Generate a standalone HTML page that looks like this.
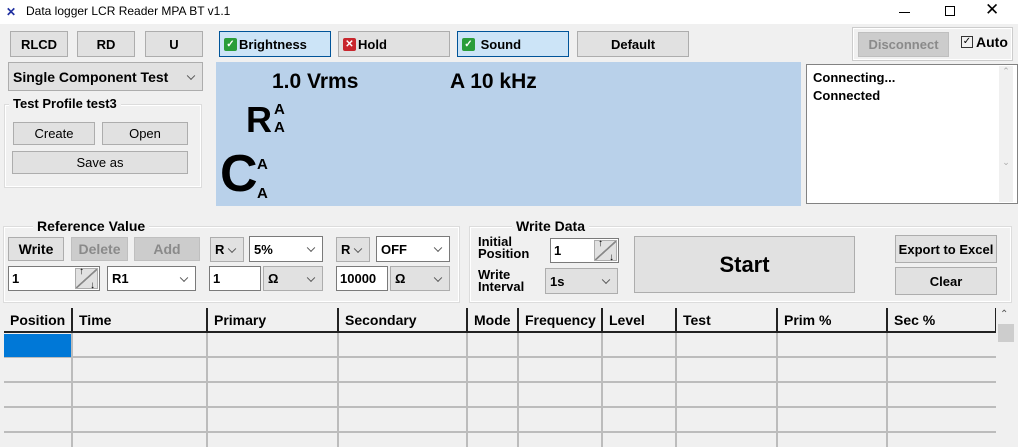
<!DOCTYPE html>
<html><head><meta charset="utf-8"><style>
*{box-sizing:border-box;margin:0;padding:0}
body{width:1018px;height:447px;background:#f0f0f0;position:relative;overflow:hidden;font-family:"Liberation Sans",sans-serif;font-size:13px;color:#000}
.a{position:absolute}
.btn{position:absolute;background:#e1e1e1;border:1px solid #adadad;display:flex;align-items:center;justify-content:center;font-weight:bold;font-size:13px}
.dis{background:#cccccc;border-color:#bfbfbf;color:#8a8a8a}
.sel{background:#cce4f7;border-color:#005499}
.dd{position:absolute;border:1px solid #7a7a7a;background:#fff;font-weight:bold;font-size:13px;padding-left:4px;display:flex;align-items:center}
.dd.g{background:#e1e1e1;border-color:#adadad}
.dd:after{content:"";position:absolute;right:8px;top:50%;width:5px;height:5px;border-right:1px solid #555;border-bottom:1px solid #555;transform:translateY(-70%) rotate(45deg)}
.grp{position:absolute;border:1px solid #dcdcdc;box-shadow:inset 0 0 0 1px #fff}
.lbl{position:absolute;background:#f0f0f0;font-weight:bold;padding:0 4px;font-size:13px}
.spin{position:absolute;border:1px solid #7a7a7a;background:#fff;font-weight:bold;padding-left:3px;display:flex;align-items:center}
.spin i{position:absolute;right:1px;top:1px;bottom:1px;width:23px;background:#e1e1e1;border:1px solid #adadad;background-image:linear-gradient(to bottom right,transparent 47%,#888 48%,#888 53%,transparent 54%)}
.spin i:before{content:"↑";position:absolute;left:3px;top:-3px;font-size:10px;font-weight:bold}
.spin i:after{content:"↓";position:absolute;right:2px;bottom:-3px;font-size:10px;font-weight:bold}
.hd{position:absolute;top:308px;height:25px;border-right:2px solid #222;border-bottom:2px solid #222;background:#f0f0f0;font-weight:bold;font-size:14px;padding:4px 0 0 6px}
.ck{display:inline-block;width:13px;height:13px;border-radius:2px;margin:0 2px 0 4px;color:#fff;font-size:10px;line-height:13px;text-align:center}
</style></head><body>
<div class="a" style="left:0;top:0;width:1018px;height:24px;background:#fff"></div>
<div class="a" style="left:6px;top:5px;color:#2030a0;font-size:12px;font-weight:bold">✕</div>
<div class="a" style="left:26px;top:4px;font-size:12px">Data logger LCR Reader MPA BT v1.1</div>
<div class="a" style="left:899px;top:12px;width:11px;height:1px;background:#000"></div>
<div class="a" style="left:945px;top:6px;width:10px;height:10px;border:1px solid #000"></div>
<div class="a" style="left:985px;top:0px;font-size:17px;font-weight:100">✕</div>

<div class="btn" style="left:10px;top:31px;width:58px;height:26px">RLCD</div>
<div class="btn" style="left:77px;top:31px;width:58px;height:26px">RD</div>
<div class="btn" style="left:145px;top:31px;width:58px;height:26px">U</div>
<div class="btn sel" style="left:219px;top:31px;width:112px;height:26px;justify-content:flex-start"><span class="ck" style="background:#2a9d3a">✓</span>Brightness</div>
<div class="btn" style="left:338px;top:31px;width:112px;height:26px;justify-content:flex-start"><span class="ck" style="background:#c8262d">✕</span>Hold</div>
<div class="btn sel" style="left:457px;top:31px;width:112px;height:26px;justify-content:flex-start"><span class="ck" style="background:#2a9d3a">✓</span>&nbsp;Sound</div>
<div class="btn" style="left:577px;top:31px;width:112px;height:26px">Default</div>

<div class="a" style="left:852px;top:27px;width:161px;height:34px;border:1px solid #ccc;box-shadow:inset 0 0 0 1px #fff"></div>
<div class="btn dis" style="left:858px;top:32px;width:91px;height:25px">Disconnect</div>
<div class="a" style="left:961px;top:36px;width:12px;height:12px;border:1px solid #333;font-size:10px;line-height:10px;text-align:center">✓</div>
<div class="a" style="left:976px;top:34px;font-weight:bold;font-size:14px">Auto</div>

<div class="dd g" style="left:8px;top:62px;width:195px;height:29px;font-size:14px">Single Component Test</div>

<div class="grp" style="left:4px;top:104px;width:198px;height:84px"></div>
<div class="lbl" style="left:9px;top:96px">Test Profile test3</div>
<div class="btn" style="left:13px;top:122px;width:82px;height:23px;font-weight:normal">Create</div>
<div class="btn" style="left:102px;top:122px;width:86px;height:23px;font-weight:normal">Open</div>
<div class="btn" style="left:12px;top:151px;width:176px;height:23px;font-weight:normal">Save as</div>

<div class="a" style="left:216px;top:62px;width:585px;height:144px;background:#b9d1ea"></div>
<div class="a" style="left:272px;top:70px;font-size:21px;font-weight:bold">1.0 Vrms</div>
<div class="a" style="left:450px;top:70px;font-size:21px;font-weight:bold">A 10 kHz</div>
<div class="a" style="left:246px;top:100px;font-size:36px;font-weight:bold;line-height:40px">R</div>
<div class="a" style="left:274px;top:101px;font-size:15px;font-weight:bold;line-height:18px">A<br>A</div>
<div class="a" style="left:220px;top:146px;font-size:52px;font-weight:bold;line-height:56px">C</div>
<div class="a" style="left:257px;top:150px;font-size:15px;font-weight:bold;line-height:29px">A<br>A</div>

<div class="a" style="left:806px;top:64px;width:212px;height:140px;background:#fff;border:1px solid #828282"></div>
<div class="a" style="left:999px;top:66px;width:14px;height:136px;background:#f0f0f0;color:#aaa;font-size:9px;text-align:center">⌃<br><br><br><br><br><br><br><br><br>⌄</div>
<div class="a" style="left:813px;top:69px;font-weight:bold;line-height:18px">Connecting...<br>Connected</div>

<div class="grp" style="left:3px;top:226px;width:457px;height:77px"></div>
<div class="lbl" style="left:33px;top:218px;font-size:14px">Reference Value</div>
<div class="btn" style="left:8px;top:237px;width:56px;height:24px;font-size:14px">Write</div>
<div class="btn dis" style="left:71px;top:237px;width:57px;height:24px;font-size:14px">Delete</div>
<div class="btn dis" style="left:134px;top:237px;width:66px;height:24px;font-size:14px">Add</div>
<div class="dd g" style="left:210px;top:237px;width:34px;height:25px">R</div>
<div class="dd" style="left:249px;top:236px;width:74px;height:26px">5%</div>
<div class="dd g" style="left:336px;top:237px;width:34px;height:25px">R</div>
<div class="dd" style="left:376px;top:236px;width:74px;height:26px">OFF</div>
<div class="spin" style="left:8px;top:266px;width:92px;height:25px">1<i></i></div>
<div class="dd" style="left:107px;top:266px;width:89px;height:25px">R1</div>
<div class="spin" style="left:209px;top:266px;width:52px;height:25px">1</div>
<div class="dd g" style="left:263px;top:266px;width:60px;height:25px">Ω</div>
<div class="spin" style="left:336px;top:266px;width:52px;height:25px">10000</div>
<div class="dd g" style="left:390px;top:266px;width:60px;height:25px">Ω</div>

<div class="grp" style="left:469px;top:226px;width:543px;height:77px"></div>
<div class="lbl" style="left:512px;top:218px;font-size:14px">Write Data</div>
<div class="a" style="left:478px;top:236px;font-weight:bold;line-height:12px">Initial<br>Position</div>
<div class="spin" style="left:550px;top:238px;width:69px;height:25px">1<i></i></div>
<div class="a" style="left:478px;top:269px;font-weight:bold;line-height:12px">Write<br>Interval</div>
<div class="dd g" style="left:545px;top:268px;width:73px;height:26px">1s</div>
<div class="btn" style="left:634px;top:236px;width:221px;height:57px;font-size:22px">Start</div>
<div class="btn" style="left:895px;top:235px;width:102px;height:28px">Export to Excel</div>
<div class="btn" style="left:895px;top:267px;width:102px;height:28px">Clear</div>

<div class="a" style="left:4px;top:333px;width:992px;height:114px;background:#f0f0f0;background-image:repeating-linear-gradient(to bottom,transparent 0,transparent 23px,#bcbcbc 23px,#bcbcbc 25px)"></div>
<div class="a" style="left:4px;top:334px;width:68px;height:23px;background:#0078d7"></div>
<div class="a" style="left:71px;top:333px;width:2px;height:114px;background:#bcbcbc"></div>
<div class="a" style="left:206px;top:333px;width:2px;height:114px;background:#bcbcbc"></div>
<div class="a" style="left:337px;top:333px;width:2px;height:114px;background:#bcbcbc"></div>
<div class="a" style="left:466px;top:333px;width:2px;height:114px;background:#bcbcbc"></div>
<div class="a" style="left:517px;top:333px;width:2px;height:114px;background:#bcbcbc"></div>
<div class="a" style="left:601px;top:333px;width:2px;height:114px;background:#bcbcbc"></div>
<div class="a" style="left:675px;top:333px;width:2px;height:114px;background:#bcbcbc"></div>
<div class="a" style="left:776px;top:333px;width:2px;height:114px;background:#bcbcbc"></div>
<div class="a" style="left:886px;top:333px;width:2px;height:114px;background:#bcbcbc"></div>
<div class="hd" style="left:4px;width:69px">Position</div>
<div class="hd" style="left:73px;width:135px">Time</div>
<div class="hd" style="left:208px;width:131px">Primary</div>
<div class="hd" style="left:339px;width:129px">Secondary</div>
<div class="hd" style="left:468px;width:51px">Mode</div>
<div class="hd" style="left:519px;width:84px">Frequency</div>
<div class="hd" style="left:603px;width:74px">Level</div>
<div class="hd" style="left:677px;width:101px">Test</div>
<div class="hd" style="left:778px;width:110px">Prim %</div>
<div class="hd" style="left:888px;width:109px">Sec %</div>
<div class="a" style="left:996px;top:308px;width:22px;height:139px;background:#f0f0f0"></div>
<div class="a" style="left:1000px;top:309px;font-size:10px;color:#555">⌃</div>
<div class="a" style="left:998px;top:324px;width:16px;height:18px;background:#cdcdcd"></div>
</body></html>
